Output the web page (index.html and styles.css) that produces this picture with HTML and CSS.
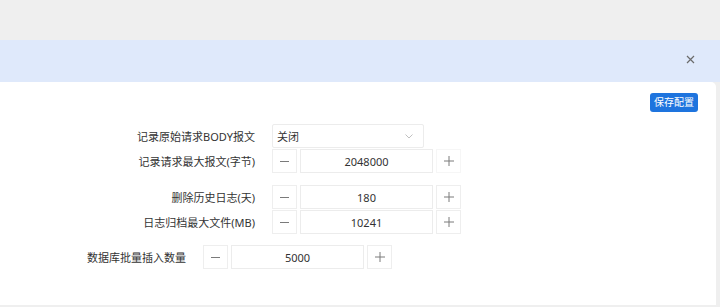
FILE: index.html
```html
<!DOCTYPE html>
<html lang="zh-CN">
<head>
<meta charset="utf-8">
<title>配置</title>
<link rel="stylesheet" href="styles.css">
</head>
<body>
<div class="top-space"></div>
<div class="band">
  <button class="close" aria-label="关闭">
    <svg width="9" height="9" viewBox="0 0 9 9"><path d="M1 1L8 8M8 1L1 8" stroke="#6b6b6b" stroke-width="1.2" fill="none"/></svg>
  </button>
</div>
<div class="card">
  <div class="toolbar"><button class="save">保存配置</button></div>

  <div class="form form-wide">
    <label>记录原始请求BODY报文</label>
    <div class="select"><span>关闭</span>
      <svg width="8" height="5" viewBox="0 0 8 5"><path d="M0.5 0.5L4 4L7.5 0.5" stroke="#c0c0c0" stroke-width="1" fill="none"/></svg>
    </div>
    <label>记录请求最大报文(字节)</label>
    <div class="num">
      <span class="step"><svg width="9" height="9" viewBox="0 0 9 9"><path d="M0 4.5H9" stroke="#7a7a7a" stroke-width="1"/></svg></span>
      <span class="val">2048000</span>
      <span class="step plain"><svg width="10" height="10" viewBox="0 0 10 10"><path d="M0 5H10M5 0V10" stroke="#7a7a7a" stroke-width="1"/></svg></span>
    </div>
  </div>

  <div class="form form-wide">
    <label>删除历史日志(天)</label>
    <div class="num">
      <span class="step"><svg width="9" height="9" viewBox="0 0 9 9"><path d="M0 4.5H9" stroke="#7a7a7a" stroke-width="1"/></svg></span>
      <span class="val">180</span>
      <span class="step"><svg width="10" height="10" viewBox="0 0 10 10"><path d="M0 5H10M5 0V10" stroke="#7a7a7a" stroke-width="1"/></svg></span>
    </div>
    <label>日志归档最大文件(MB)</label>
    <div class="num">
      <span class="step"><svg width="9" height="9" viewBox="0 0 9 9"><path d="M0 4.5H9" stroke="#7a7a7a" stroke-width="1"/></svg></span>
      <span class="val">10241</span>
      <span class="step"><svg width="10" height="10" viewBox="0 0 10 10"><path d="M0 5H10M5 0V10" stroke="#7a7a7a" stroke-width="1"/></svg></span>
    </div>
  </div>

  <div class="form form-narrow">
    <label>数据库批量插入数量</label>
    <div class="num">
      <span class="step"><svg width="9" height="9" viewBox="0 0 9 9"><path d="M0 4.5H9" stroke="#7a7a7a" stroke-width="1"/></svg></span>
      <span class="val">5000</span>
      <span class="step"><svg width="10" height="10" viewBox="0 0 10 10"><path d="M0 5H10M5 0V10" stroke="#7a7a7a" stroke-width="1"/></svg></span>
    </div>
  </div>
</div>
</body>
</html>
```
FILE: styles.css
```css
html, body {
  margin: 0;
  padding: 0;
  height: 100%;
}
body {
  background: #efefef;
  font-family: "Noto Sans", "Noto Sans CJK SC", sans-serif;
  font-size: 11px;
  color: #333;
  overflow: hidden;
}
.top-space {
  height: 40px;
}
.band {
  height: 42px;
  background: #dfe9fb;
  display: flex;
  align-items: center;
  justify-content: flex-end;
  padding-right: 25px;
}
.close {
  border: 0;
  background: transparent;
  padding: 0;
  width: 9px;
  height: 9px;
  display: flex;
  margin-top: -4px;
}
.card {
  background: #fff;
  margin-right: 4px;
  border-top-right-radius: 5px;
  height: 223px;
  padding-top: 11px;
  box-sizing: border-box;
}
.toolbar {
  display: flex;
  justify-content: flex-end;
  padding-right: 18px;
  height: 19px;
}
.save {
  background: #1e74de;
  color: #fff;
  border: 0;
  border-radius: 3px;
  width: 48px;
  height: 19px;
  padding: 0;
  font-family: inherit;
  font-size: 10px;
  line-height: 19px;
}
.form {
  display: grid;
  column-gap: 17px;
  row-gap: 1px;
  grid-auto-rows: 24px;
  align-items: center;
  margin-top: 12px;
}
.form-wide {
  grid-template-columns: 255px auto;
  justify-content: start;
}
.form-narrow {
  grid-template-columns: 186px auto;
  justify-content: start;
  margin-top: 11px;
}
.form label {
  text-align: right;
  white-space: nowrap;
}
.select {
  width: 152px;
  height: 24px;
  box-sizing: border-box;
  border: 1px solid #ececec;
  border-radius: 2px;
  display: flex;
  align-items: center;
  justify-content: space-between;
  padding: 0 10px 0 4px;
}
.num {
  display: flex;
  gap: 3px;
  height: 24px;
}
.step {
  width: 25px;
  height: 24px;
  box-sizing: border-box;
  border: 1px solid #eeeeee;
  display: flex;
  align-items: center;
  justify-content: center;
}
.step.plain {
  border-color: #f6f6f6;
}
.val {
  width: 133px;
  height: 24px;
  box-sizing: border-box;
  border: 1px solid #ececec;
  display: flex;
  align-items: center;
  justify-content: center;
}
```
